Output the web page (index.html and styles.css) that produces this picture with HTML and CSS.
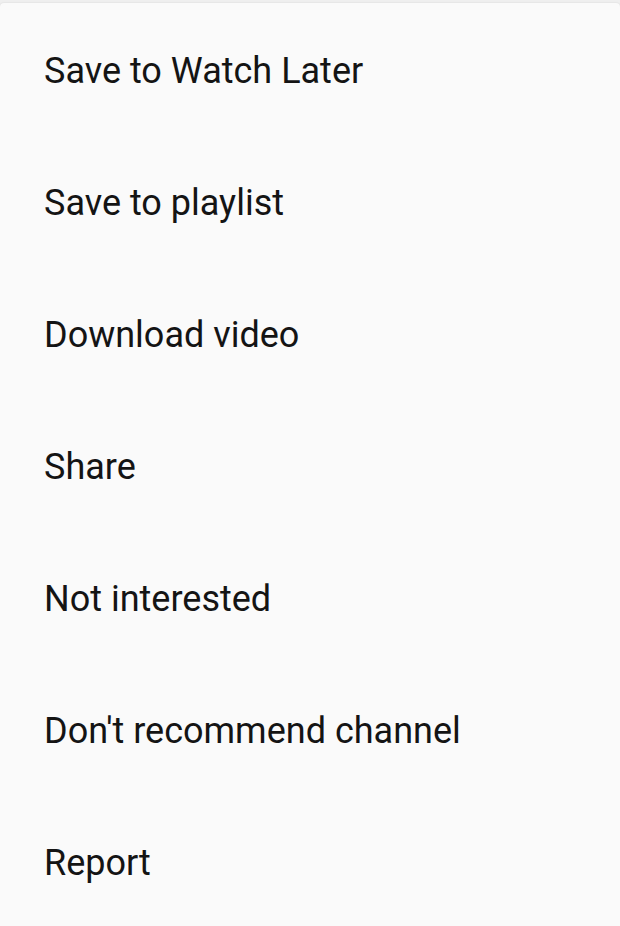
FILE: index.html
```html
<!DOCTYPE html>
<html>
<head>
<meta charset="utf-8">
<link rel="stylesheet" href="styles.css">
</head>
<body>
<div class="sheet">
  <ul class="menu">
    <li class="item">Save to Watch Later</li>
    <li class="item">Save to playlist</li>
    <li class="item">Download video</li>
    <li class="item">Share</li>
    <li class="item">Not interested</li>
    <li class="item">Don't recommend channel</li>
    <li class="item">Report</li>
  </ul>
</div>
</body>
</html>
```
FILE: styles.css
```css
html, body {
  margin: 0;
  padding: 0;
  background: #efefef;
  height: 100%;
  overflow: hidden;
}
.sheet {
  margin-top: 3px;
  background: #fafafa;
  border-radius: 4px;
  box-shadow: 0 0 2px rgba(0,0,0,0.12);
  height: 930px;
}
.menu {
  list-style: none;
  margin: 0;
  padding: 0;
}
.item {
  box-sizing: border-box;
  height: 132px;
  display: flex;
  align-items: center;
  padding: 4px 0 0 44px;
  font-family: Roboto, "Liberation Sans", sans-serif;
  font-size: 36px;
  color: #141414;
}
```
